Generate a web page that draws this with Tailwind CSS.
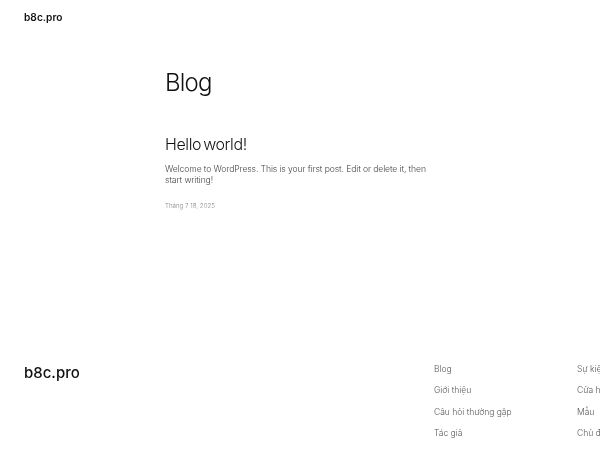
<!DOCTYPE html>
<html lang="vi">
<head>
    <meta charset="UTF-8">
    <meta name="viewport" content="width=device-width, initial-scale=1.0">
    <title>Blog – b8c.pro</title>
    <script src="https://cdn.jsdelivr.net/npm/@tailwindcss/browser@4"></script>
</head>
<body class="bg-white h-[450px] w-[600px] overflow-hidden font-['Inter',sans-serif] text-[#111] blur-[0.4px]">
    <!-- Header -->
    <header class="px-6 pt-[11px] h-[64px]">
        <a class="block text-[10.2px] leading-[12px] font-semibold">b8c.pro</a>
    </header>

    <!-- Posts -->
    <main class="pl-[165px] pt-px w-[436px] h-[286px]">
        <h1 class="text-[24px] leading-[36px] font-light tracking-[-0.8px]">Blog</h1>
        <article class="mt-[33px]">
            <h2 class="text-[16px] leading-[20px] font-light tracking-[-0.4px] [word-spacing:-2px]">Hello world!</h2>
            <p class="mt-[10px] text-[8.6px] leading-[11px] font-light text-[#444] tracking-[-0.1px]">Welcome to WordPress. This is your first post. Edit or delete it, then start writing!</p>
            <p class="mt-[16px] text-[6.2px] leading-[8px] font-light text-[#888]">Tháng 7 18, 2025</p>
        </article>
    </main>

    <!-- Footer -->
    <footer class="flex pl-6 pt-[13px]">
        <a class="w-[410px] shrink-0 text-[15px] leading-[20px] font-medium">b8c.pro</a>
        <nav class="w-[143px] shrink-0 mt-px flex flex-col gap-[10.3px] text-[8.5px] leading-[11px] font-light text-[#555]">
            <a>Blog</a>
            <a>Giới thiệu</a>
            <a>Câu hỏi thường gặp</a>
            <a>Tác giả</a>
        </nav>
        <nav class="shrink-0 mt-px flex flex-col gap-[10.3px] text-[8.5px] leading-[11px] font-light text-[#555] whitespace-nowrap">
            <a>Sự kiện</a>
            <a>Cửa hàng</a>
            <a>Mẫu</a>
            <a>Chủ đề</a>
        </nav>
    </footer>
</body>
</html>
